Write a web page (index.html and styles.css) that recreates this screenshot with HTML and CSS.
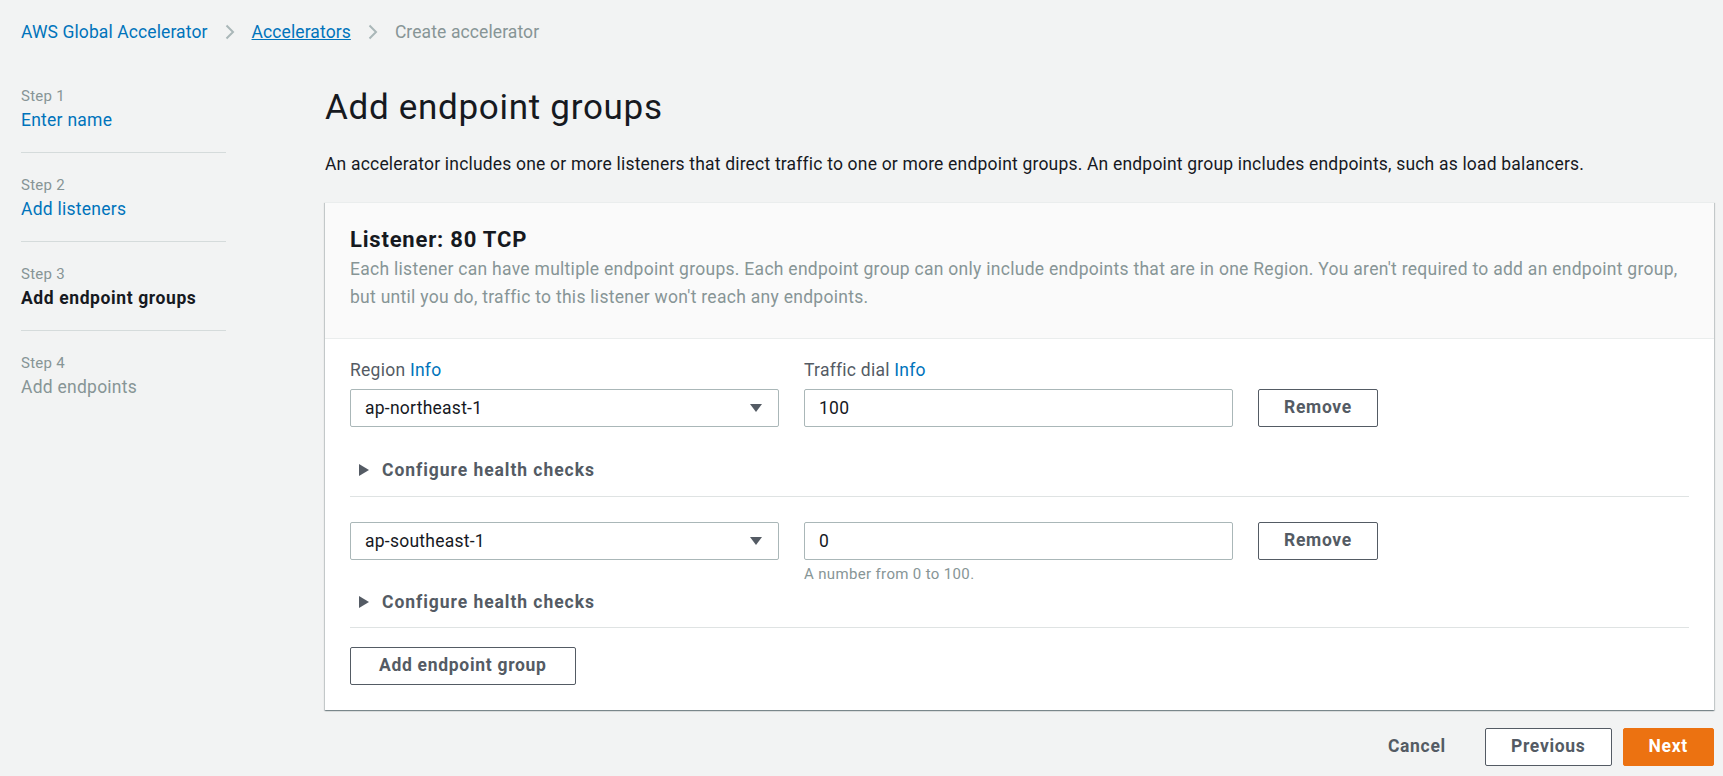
FILE: index.html
```html
<!DOCTYPE html>
<html lang="en">
<head>
<meta charset="utf-8">
<title>Create accelerator</title>
<link rel="stylesheet" href="styles.css">
</head>
<body>
<div class="page">
  <nav class="breadcrumbs">
    <a class="crumb-link" href="#">AWS Global Accelerator</a>
    <svg class="crumb-sep" width="10" height="16" viewBox="0 0 10 16"><path d="M1.5 1.5 L8 8 L1.5 14.5" fill="none" stroke="#aab7b8" stroke-width="2"/></svg>
    <a class="crumb-link crumb-underline" href="#">Accelerators</a>
    <svg class="crumb-sep" width="10" height="16" viewBox="0 0 10 16"><path d="M1.5 1.5 L8 8 L1.5 14.5" fill="none" stroke="#aab7b8" stroke-width="2"/></svg>
    <span class="crumb-current">Create accelerator</span>
  </nav>

  <div class="layout">
    <aside class="steps">
      <div class="step">
        <div class="step-label">Step 1</div>
        <a class="step-link" href="#">Enter name</a>
      </div>
      <div class="step">
        <div class="step-label">Step 2</div>
        <a class="step-link" href="#">Add listeners</a>
      </div>
      <div class="step">
        <div class="step-label">Step 3</div>
        <div class="step-active">Add endpoint groups</div>
      </div>
      <div class="step">
        <div class="step-label">Step 4</div>
        <div class="step-disabled">Add endpoints</div>
      </div>
    </aside>

    <main class="content">
      <h1 class="title">Add endpoint groups</h1>
      <p class="intro">An accelerator includes one or more listeners that direct traffic to one or more endpoint groups. An endpoint group includes endpoints, such as load balancers.</p>

      <section class="card">
        <header class="card-header">
          <h2 class="card-title">Listener: 80 TCP</h2>
          <p class="card-desc">Each listener can have multiple endpoint groups. Each endpoint group can only include endpoints that are in one Region. You aren't required to add an endpoint group, but until you do, traffic to this listener won't reach any endpoints.</p>
        </header>

        <div class="card-body">
          <div class="group">
            <div class="field-grid">
              <div class="field-label">Region <a class="info" href="#">Info</a></div>
              <div class="field-label">Traffic dial <a class="info" href="#">Info</a></div>
              <div></div>
              <div class="select"><span>ap-northeast-1</span><svg width="12" height="8" viewBox="0 0 12 8"><polygon points="0,0 12,0 6,8" fill="#545b64"/></svg></div>
              <div class="input">100</div>
              <div><button class="btn">Remove</button></div>
            </div>
            <div class="expander">
              <svg width="10" height="12" viewBox="0 0 10 12"><polygon points="0,0 10,6 0,12" fill="#545b64"/></svg>
              <span>Configure health checks</span>
            </div>
          </div>

          <div class="group group-next">
            <div class="field-grid field-grid-hint">
              <div class="select"><span>ap-southeast-1</span><svg width="12" height="8" viewBox="0 0 12 8"><polygon points="0,0 12,0 6,8" fill="#545b64"/></svg></div>
              <div class="input">0</div>
              <div><button class="btn">Remove</button></div>
              <div></div>
              <div class="hint">A number from 0 to 100.</div>
              <div></div>
            </div>
            <div class="expander expander-tight">
              <svg width="10" height="12" viewBox="0 0 10 12"><polygon points="0,0 10,6 0,12" fill="#545b64"/></svg>
              <span>Configure health checks</span>
            </div>
          </div>

          <button class="btn btn-add">Add endpoint group</button>
        </div>
      </section>

      <div class="actions">
        <button class="btn btn-link">Cancel</button>
        <button class="btn">Previous</button>
        <button class="btn btn-primary">Next</button>
      </div>
    </main>
  </div>
</div>
</body>
</html>
```

FILE: styles.css
```css
* { box-sizing: border-box; }

body {
  margin: 0;
  background: #f2f3f3;
  font-family: Roboto, "Liberation Sans", Arial, sans-serif;
  font-size: 17.5px;
  letter-spacing: 0.25px;
  color: #16191f;
}

.page {
  padding: 0 9px 0 21px;
}

.breadcrumbs {
  height: 64px;
  display: flex;
  align-items: center;
  gap: 17px;
  line-height: 24px;
  letter-spacing: 0.1px;
}

.crumb-link {
  color: #0073bb;
  text-decoration: none;
}

.crumb-underline {
  text-decoration: underline;
}

.crumb-current {
  color: #879596;
}

.crumb-sep {
  display: block;
}

.layout {
  display: grid;
  grid-template-columns: 205px 1fr;
  column-gap: 99px;
}

.step {
  padding: 21px 0 19px;
  border-bottom: 1px solid #d5dbdb;
}

.step:last-child {
  border-bottom: none;
}

.step-label {
  font-size: 15px;
  line-height: 22px;
  color: #879596;
}

.step-link,
.step-active,
.step-disabled {
  display: block;
  line-height: 26px;
}

.step-link {
  color: #0073bb;
  text-decoration: none;
}

.step-active {
  font-weight: 700;
  letter-spacing: 0.6px;
  color: #16191f;
}

.step-disabled {
  color: #879596;
}

.title {
  margin: 22px 0 0;
  font-size: 35px;
  line-height: 44px;
  font-weight: 400;
  letter-spacing: 0.7px;
}

.intro {
  margin: 21px 0 0;
  line-height: 26px;
  letter-spacing: 0.19px;
}

.card {
  margin-top: 25px;
  background: #fff;
  border-top: 1px solid #eaeded;
  box-shadow: 0 1px 1px 0 rgba(0, 28, 36, 0.3), 1px 1px 1px 0 rgba(0, 28, 36, 0.15), -1px 1px 1px 0 rgba(0, 28, 36, 0.15);
}

.card-header {
  background: #fafafa;
  padding: 22px 25px 27px;
  border-bottom: 1px solid #eaeded;
}

.card-title {
  margin: 0;
  font-size: 22px;
  line-height: 30px;
  font-weight: 700;
  letter-spacing: 0.8px;
}

.card-desc {
  margin: 0;
  color: #879596;
  line-height: 28px;
  letter-spacing: 0.28px;
}

.card-body {
  padding: 19px 25px 25px;
}

.group {
  padding-bottom: 13px;
  border-bottom: 1px solid #dfe3e3;
}

.group-next {
  margin-top: 25px;
  padding-bottom: 12px;
}

.field-grid {
  display: grid;
  grid-template-columns: 429px 429px auto;
  column-gap: 25px;
  row-gap: 7px;
}

.field-grid-hint {
  row-gap: 4px;
}

.field-label {
  line-height: 24px;
  color: #545b64;
}

.info {
  color: #0073bb;
  text-decoration: none;
}

.select,
.input {
  height: 38px;
  border: 1px solid #aab7b8;
  border-radius: 2px;
  background: #fff;
  display: flex;
  align-items: center;
  color: #16191f;
}

.select {
  justify-content: space-between;
  padding: 0 16px 0 14px;
}

.select svg {
  display: block;
}

.input {
  padding: 0 14px;
}

.hint {
  font-size: 15px;
  line-height: 20px;
  letter-spacing: 0.35px;
  color: #879596;
}

.expander {
  margin-top: 30px;
  padding-left: 9px;
  display: flex;
  align-items: center;
  gap: 13px;
  line-height: 26px;
  font-weight: 700;
  letter-spacing: 0.95px;
  color: #545b64;
}

.expander svg {
  display: block;
}

.expander-tight {
  margin-top: 5px;
}

.btn {
  height: 38px;
  padding: 0 25px;
  border: 1px solid #545b64;
  border-radius: 2px;
  background: #fff;
  color: #545b64;
  font-family: inherit;
  font-size: 17.5px;
  font-weight: 700;
  letter-spacing: 0.7px;
  line-height: 1;
  cursor: pointer;
}

.btn-add {
  margin-top: 19px;
  padding: 0 28px;
}

.btn-primary {
  background: #ec7211;
  border-color: #ec7211;
  color: #fff;
}

.btn-link {
  background: transparent;
  border-color: transparent;
  padding: 0 22px;
  margin-right: 5px;
}

.actions {
  margin-top: 18px;
  display: flex;
  justify-content: flex-end;
  gap: 11px;
}
```
